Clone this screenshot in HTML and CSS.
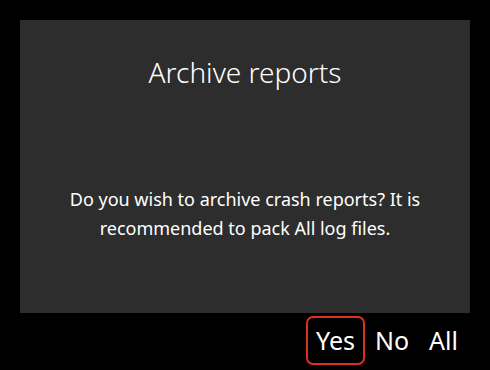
FILE: index.html
```
<html><head>
<meta charset="UTF-8"><link rel="stylesheet" href="styles.css">
</head><body>
<div class="dialog">
<h1 class="title">Archive reports</h1>
<p class="message">Do you wish to archive crash reports? It is recommended to pack All log files.</p>
</div>
<div class="buttons">
<span class="btn selected">Yes</span>
<span class="btn">No</span>
<span class="btn">All</span>
</div>
</body></html>
```
FILE: styles.css
```
body {margin: 0; background: #000; color: #fff; font-family: "Noto Sans", "Open Sans", sans-serif;
	width: 490px; height: 370px; overflow: hidden;}
.dialog {
	background: #2d2d2d; margin: 20px 20px 0 20px; height: 293px;
	display: flex; flex-direction: column; align-items: center;
}
.title {font-size: 28px; font-weight: 300; margin: 33px 0 0 0; line-height: 38px;}
.message {font-size: 18px; text-align: center; margin: 94px 40px 0 40px; line-height: 29px;}
.buttons {display: flex; justify-content: flex-end; align-items: center;
	padding: 3px 22px 0 0;}
.btn {font-size: 25px; line-height: 45px; padding: 0 8px; border: 2px solid transparent; border-radius: 7px;}
.selected {border-color: #d9321c;}
```
